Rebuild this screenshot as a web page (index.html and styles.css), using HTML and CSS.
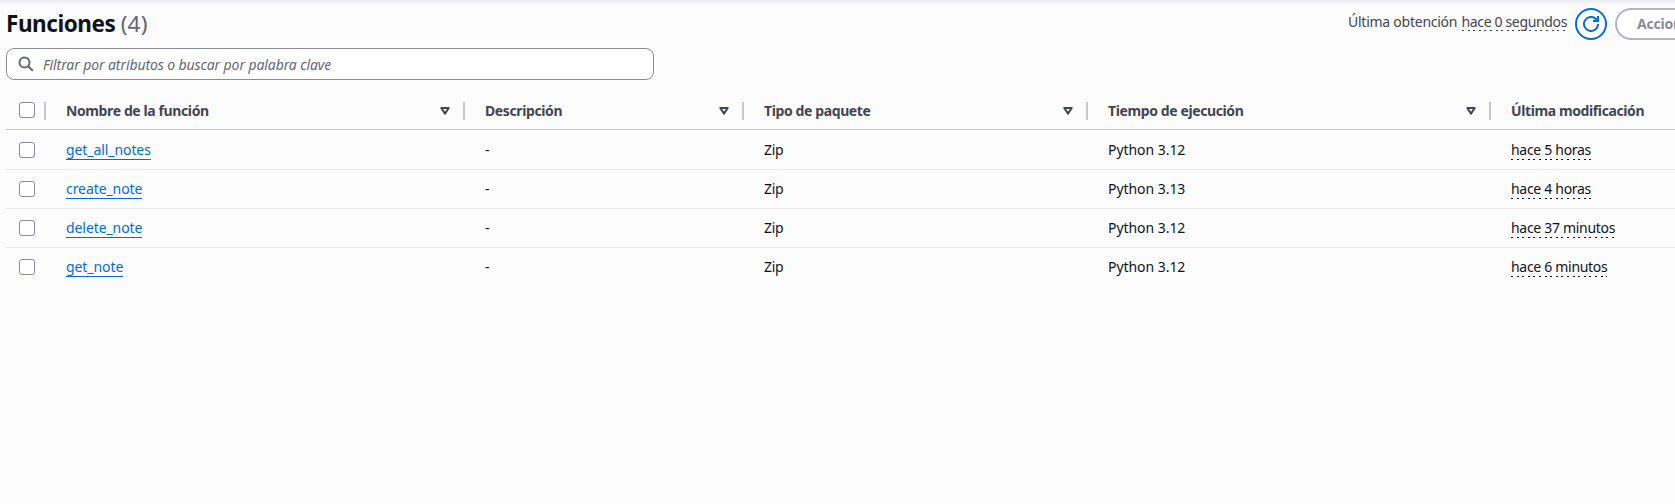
FILE: index.html
```html
<!DOCTYPE html>
<html lang="es">
<head>
<meta charset="utf-8">
<title>Funciones</title>
<link rel="stylesheet" href="styles.css">
</head>
<body>
<svg class="defs" width="0" height="0" aria-hidden="true">
<symbol id="sort" viewBox="0 0 10 8"><path d="M1.3 1h7.4L5 6.6z" fill="none" stroke="currentColor" stroke-width="2" stroke-linejoin="round"/></symbol>
</svg>
<main class="panel">
<header class="toolbar">
<h1 class="title">Funciones <span class="count">(4)</span></h1>
<div class="actions">
<p class="fetched"><span class="label">Última obtención</span> <span class="ago">hace 0 segundos</span></p>
<button class="refresh" aria-label="Actualizar"><svg width="16" height="16" viewBox="0 0 16 16" fill="none" stroke="currentColor" stroke-width="2"><path d="M15 8A7 7 0 1 1 12.6 2.7L15 5M15 0v5H10"/></svg></button>
<button class="menu" disabled>Acciones</button>
</div>
</header>
<div class="search">
<svg width="16" height="16" viewBox="0 0 16 16" fill="none" stroke="currentColor" stroke-width="2"><circle cx="6.5" cy="6.5" r="5"/><path d="M10.2 10.2l4.6 4.6"/></svg>
<span class="placeholder">Filtrar por atributos o buscar por palabra clave</span>
</div>
<div class="table">
<div class="row head">
<div class="pick"><span class="box"></span></div>
<div class="th"><span>Nombre de la función</span><svg class="sort"><use href="#sort"/></svg></div>
<div class="th"><span>Descripción</span><svg class="sort"><use href="#sort"/></svg></div>
<div class="th"><span>Tipo de paquete</span><svg class="sort"><use href="#sort"/></svg></div>
<div class="th"><span>Tiempo de ejecución</span><svg class="sort"><use href="#sort"/></svg></div>
<div class="th"><span>Última modificación</span></div>
</div>
<div class="row first"><div class="pick"><span class="box"></span></div><div class="td"><a class="link">get_all_notes</a></div><div class="td">-</div><div class="td">Zip</div><div class="td runtime">Python 3.12</div><div class="td"><span class="ago">hace 5 horas</span></div></div>
<div class="row"><div class="pick"><span class="box"></span></div><div class="td"><a class="link">create_note</a></div><div class="td">-</div><div class="td">Zip</div><div class="td runtime">Python 3.13</div><div class="td"><span class="ago">hace 4 horas</span></div></div>
<div class="row"><div class="pick"><span class="box"></span></div><div class="td"><a class="link">delete_note</a></div><div class="td">-</div><div class="td">Zip</div><div class="td runtime">Python 3.12</div><div class="td"><span class="ago">hace 37 minutos</span></div></div>
<div class="row"><div class="pick"><span class="box"></span></div><div class="td"><a class="link">get_note</a></div><div class="td">-</div><div class="td">Zip</div><div class="td runtime">Python 3.12</div><div class="td"><span class="ago">hace 6 minutos</span></div></div>
</div>
</main>
</body>
</html>
```
FILE: styles.css
```css
* { box-sizing: border-box; }
body { margin: 0; height: 504px; overflow: hidden; background: linear-gradient(#ebebf0, #fcfcfd 5px) #fcfcfd; color: #0f141a; font: 14px/20px "Noto Sans", sans-serif; letter-spacing: -0.3px; }
.defs { display: block; height: 0; }
.panel { padding: 8px 0 0 6px; }
.toolbar { display: flex; justify-content: space-between; height: 40px; }
.title { margin: 0; font-size: 22.5px; line-height: 32px; letter-spacing: -0.45px; white-space: pre; }
.count { color: #656871; font-weight: 400; letter-spacing: 0.15px; }
.actions { display: flex; gap: 8px; width: 327px; flex: none; }
.fetched { margin: 4px 0 0; width: 219px; flex: none; display: flex; justify-content: space-between; align-items: flex-start; color: #424650; letter-spacing: -0.35px; white-space: nowrap; }
.label { letter-spacing: -0.25px; }
.ago { display: inline-block; height: 20px; line-height: 20px; background: repeating-linear-gradient(90deg, currentColor 0 2px, transparent 2px 5.6px) bottom / 100% 1px no-repeat; white-space: nowrap; }
.refresh { width: 32px; height: 32px; flex: none; padding: 0; display: grid; place-items: center; border: 2px solid #006ce0; border-radius: 50%; background: #fff; color: #006ce0; }
.fetched .ago { height: 19px; }
.menu { height: 32px; flex: none; padding: 0 20px; border: 2px solid #b4b4bb; border-radius: 16px; background: #fff; color: #8c8c94; font: 700 14px/20px "Noto Sans", sans-serif; letter-spacing: -0.2px; }
.search { display: flex; align-items: center; gap: 9px; width: 648px; height: 32px; padding: 0 12px 0 11px; border: 1px solid #8c8c94; border-radius: 8px; background: #fff; color: #656871; }
.placeholder { padding-top: 1px; font-style: italic; letter-spacing: -0.1px; white-space: nowrap; }
.table { margin-top: 11px; }
.row { display: grid; grid-template-columns: 40px 419px 279px 344px 403px 184px; height: 39px; align-items: center; border-bottom: 1px solid #ebebf0; }
.row.first { height: 40px; padding-top: 1px; }
.row:last-child { border-bottom: 0; height: 38px; }
.head { border-color: #c6c6cd; color: #424650; font-weight: 700; padding-top: 2px; letter-spacing: -0.39px; }
.pick { height: 18px; padding: 0 0 0 13px; display: flex; align-items: center; }
.head .pick { border-right: 2px solid #c6c6cd; }
.box { width: 16px; height: 16px; border: 1px solid #8c8c94; border-radius: 3px; background: #fff; }
.head .box { margin-top: -2px; }
.th { display: flex; align-items: center; justify-content: space-between; height: 18px; padding: 0 13px 0 20px; border-right: 2px solid #c6c6cd; white-space: nowrap; }
.th:last-child { border: 0; }
.sort { width: 10px; height: 8px; }
.td { padding-left: 20px; height: 20px; }
.runtime { letter-spacing: -0.05px; }
.link { display: inline-block; height: 20px; line-height: 20px; border-bottom: 1px solid #006ce0; color: #006ce0; letter-spacing: -0.08px; }
```
